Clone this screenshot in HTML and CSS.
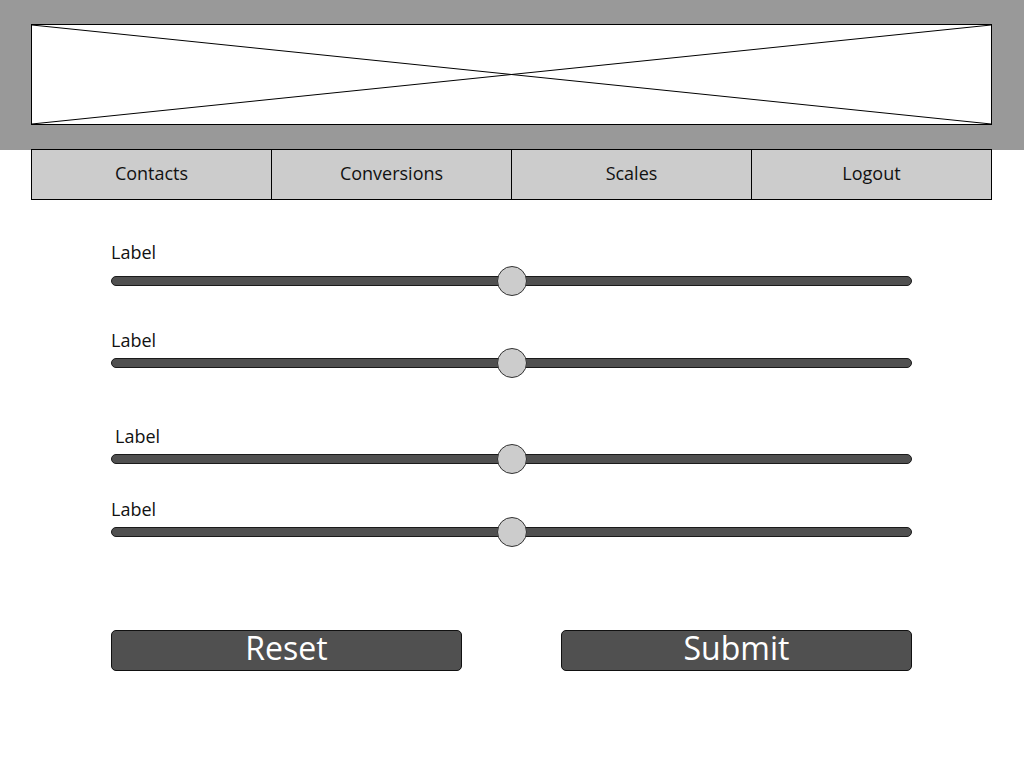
FILE: index.html
```html
<!DOCTYPE html>
<html lang="en">

<head>
    <meta charset="utf-8">
    <title>Scales</title>
    <link rel="stylesheet" href="styles.css">
</head>

<body>
    <header class="banner">
        <div class="banner-img">
            <svg class="placeholder" viewBox="0 0 100 100" preserveAspectRatio="none">
                <line x1="0" y1="0" x2="100" y2="100" />
                <line x1="0" y1="100" x2="100" y2="0" />
            </svg>
        </div>
    </header>

    <nav class="menu">
        <a class="menu-item" href="#">Contacts</a>
        <a class="menu-item" href="#">Conversions</a>
        <a class="menu-item" href="#">Scales</a>
        <a class="menu-item" href="#">Logout</a>
    </nav>

    <main class="content">
        <form class="scales">
            <div class="row row-1">
                <label class="label">Label</label>
                <div class="track" role="slider" aria-valuenow="50"><span class="thumb"></span></div>
            </div>
            <div class="row row-2">
                <label class="label">Label</label>
                <div class="track" role="slider" aria-valuenow="50"><span class="thumb"></span></div>
            </div>
            <div class="row row-3">
                <label class="label label-indent">Label</label>
                <div class="track" role="slider" aria-valuenow="50"><span class="thumb"></span></div>
            </div>
            <div class="row row-4">
                <label class="label">Label</label>
                <div class="track" role="slider" aria-valuenow="50"><span class="thumb"></span></div>
            </div>

            <div class="buttons">
                <button type="reset" class="btn">Reset</button>
                <button type="submit" class="btn">Submit</button>
            </div>
        </form>
    </main>
</body>

</html>
```

FILE: styles.css
```css
body {
    margin: 0;
    font-family: "Open Sans", "Liberation Sans", sans-serif;
    color: #111;
    background: #fff;
}

/* top banner */
.banner {
    height: 150px;
    box-sizing: border-box;
    padding: 24px 32px 0 31px;
    background-color: #999999;
}

.banner-img {
    height: 101px;
    border: 1px solid #000;
    background: #fff;
    box-sizing: border-box;
}

.placeholder {
    display: block;
    width: 100%;
    height: 100%;
}

.placeholder line {
    stroke: #000;
    stroke-width: 1;
    vector-effect: non-scaling-stroke;
}

/* menu */
.menu {
    display: grid;
    grid-template-columns: 239px 240px 240px 240px;
    margin: -1px 32px 0 31px;
    height: 51px;
    box-sizing: border-box;
    border: 1px solid #000;
    background-color: #cccccc;
}

.menu-item {
    text-align: center;
    font-size: 18px;
    line-height: 47px;
    color: #111;
    text-decoration: none;
    border-left: 1px solid #000;
}

.menu-item:first-child {
    border-left: none;
}

/* sliders */
.content {
    padding: 0 112px 0 111px;
}

.label {
    display: block;
    font-size: 18px;
    line-height: 20px;
}

.label-indent {
    padding-left: 4px;
}

.row-1 { margin-top: 42px; }
.row-2 { margin-top: 44px; }
.row-3 { margin-top: 58px; }
.row-4 { margin-top: 35px; }

.track {
    position: relative;
    margin-top: 8px;
    height: 10px;
    box-sizing: border-box;
    border: 1px solid #1a1a1a;
    border-radius: 5px;
    background-color: #505050;
}

.row-1 .track { margin-top: 14px; }

.thumb {
    position: absolute;
    left: 50%;
    top: 50%;
    width: 30px;
    height: 30px;
    box-sizing: border-box;
    transform: translate(-50%, -50%);
    border: 1px solid #333;
    border-radius: 50%;
    background-color: #cccccc;
}

/* buttons */
.buttons {
    display: flex;
    justify-content: space-between;
    margin-top: 93px;
}

.btn {
    width: 351px;
    height: 41px;
    padding: 0 0 6px;
    box-sizing: border-box;
    border: 1px solid #111;
    border-radius: 5px;
    background-color: #505050;
    color: #fff;
    font-family: "Open Sans", "Liberation Sans", sans-serif;
    font-size: 32px;
    line-height: 33px;
}
```
